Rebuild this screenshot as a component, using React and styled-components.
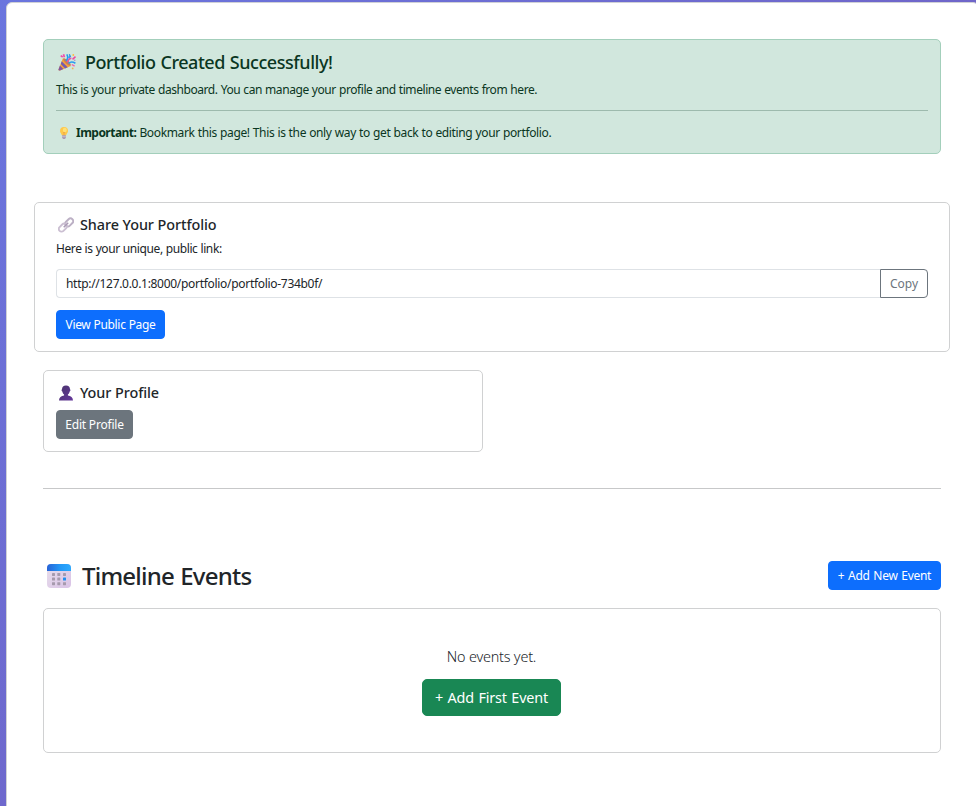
import React from "react";
import styled, { createGlobalStyle } from "styled-components";

const GlobalStyle = createGlobalStyle`
  * { box-sizing: border-box; margin: 0; }
  body {
    margin: 0;
    overflow: hidden;
    font-family: "Noto Sans", "Open Sans", sans-serif;
    font-size: 12px;
    line-height: 19px;
    color: #212529;
  }
`;

const Page = styled.div`
  width: 976px;
  height: 806px;
  overflow: hidden;
  padding: 2px 0 0 6px;
  background: linear-gradient(135deg, #6a75de 0%, #7359b8 100%);
`;

const Panel = styled.main`
  width: 973px;
  height: 840px;
  padding: 36px;
  background: #fff;
  border: 1px solid #d0d1d6;
  border-radius: 6px;
`;

const Label = styled.span`
  letter-spacing: ${(p) => p.$track || 0}px;
  word-spacing: ${(p) => p.$words || 0}px;
  white-space: nowrap;
`;

const Alert = styled.section`
  width: 898px;
  height: 115px;
  padding: 12px;
  color: #0a3622;
  background: #d1e7dd;
  border: 1px solid #a3cfbb;
  border-radius: 5px;
`;

const AlertTitle = styled.h4`
  display: flex;
  align-items: center;
  gap: 9px;
  margin-bottom: 8px;
  padding-left: 2px;
  font-size: 18px;
  font-weight: 500;
  line-height: 20px;
`;

const AlertRule = styled.hr`
  height: 1px;
  margin: 11px 0 12px;
  border: 0;
  background: #9dbaad;
`;

const Tip = styled.p`
  display: flex;
  align-items: center;
  svg { margin: 0 6px 0 2px; }
  strong { margin-right: 3px; }
`;

const Card = styled.section`
  background: #fff;
  border: 1px solid #d0d1d2;
  border-radius: 5px;
`;

const ShareCard = styled(Card)`
  width: 916px;
  height: 150px;
  margin: 48px 0 18px -9px;
  padding: 12px 21px;
`;

const ProfileCard = styled(Card)`
  width: 440px;
  height: 82px;
  padding: 12px;
`;

const CardTitle = styled.h5`
  display: flex;
  align-items: center;
  gap: 6px;
  padding-left: 2px;
  margin-bottom: ${(p) => p.$gap}px;
  font-size: 14.4px;
  font-weight: 500;
  line-height: 19px;
`;

const LinkGroup = styled.div`
  display: flex;
  height: 29px;
  margin: 11px 0 12px;
`;

const LinkField = styled.div`
  flex: 1;
  padding: 4px 9px;
  border: 1px solid #dee2e6;
  border-right: 0;
  border-radius: 4px 0 0 4px;
`;

const Button = styled.button`
  display: block;
  flex: none;
  width: ${(p) => p.$width}px;
  height: 29px;
  padding: 0;
  font: inherit;
  text-align: center;
  color: #fff;
  background: ${(p) => p.$color};
  border: 1px solid ${(p) => p.$color};
  border-radius: 4px;
`;

const CopyButton = styled(Button)`
  color: #6c757d;
  background: #fff;
  border-color: #6c757d;
  border-radius: 0 4px 4px 0;
`;

const LargeButton = styled(Button)`
  height: 37px;
  font-size: 14.4px;
  border-radius: 5px;
`;

const Divider = styled.hr`
  width: 898px;
  height: 1px;
  margin: 36px 0 72px;
  border: 0;
  background: #c7c8c9;
`;

const SectionHeader = styled.header`
  display: flex;
  justify-content: space-between;
  align-items: center;
  width: 898px;
  height: 29px;
  margin-bottom: 18px;
`;

const SectionTitle = styled.h2`
  display: flex;
  align-items: center;
  gap: 11px;
  padding-left: 4px;
  font-size: 24px;
  font-weight: 500;
  line-height: 29px;
`;

const EmptyCard = styled(Card)`
  display: flex;
  flex-direction: column;
  align-items: center;
  gap: 12px;
  width: 898px;
  height: 145px;
  padding: 37px 1px 0 0;
`;

const EmptyText = styled.p`
  font-size: 14.4px;
  font-weight: 300;
  line-height: 21px;
`;

const PartyIcon = () => (
  <svg width="18" height="18" viewBox="0 0 18 18" fill="none">
    <path d="M5 5 13 13 2 17.4Q.2 18 .6 16.3Z" fill="#f5a43c" />
    <path d="M3.7 8.2 9.7 14.3 7 15.4 2.8 11Z" fill="#755bb0" />
    <path d="M1.9 12.5 5.4 16 2 17.4Q.2 18 .6 16.3Z" fill="#8056a2" />
    <ellipse cx="9" cy="9" rx="5" ry="1.6" transform="rotate(45 9 9)" fill="#c87a58" />
    <path d="M8 8Q11 5 8.8 1.4" stroke="#209cf0" strokeWidth="1.6" />
    <path d="M9.3 9.2Q11 5 13.4 5.2" stroke="#eb4fa7" strokeWidth="1.5" />
    <path d="M10.5 10.4Q13.2 7.8 17.4 10.2" stroke="#299df0" strokeWidth="1.6" />
    <path d="m2.7 2.6 2 1.4M5.5 1.3l.9 3" stroke="#ee4daa" strokeWidth="1.7" />
    <path d="m11.3 1.2 1 2.2-1.8 1.2" stroke="#258eea" strokeWidth="1.3" />
    <path d="m14.5 6.3 3-2.6" stroke="#ed46a1" strokeWidth="1.6" />
    <path d="m13.8 11.5 2.8 1.7" stroke="#ef61b0" strokeWidth="1.4" />
    <circle cx="15.3" cy="2" r=".9" fill="#ffb83d" />
    <circle cx="16.8" cy="7.3" r=".7" fill="#a878cb" />
    <circle cx="14.7" cy="15.4" r=".9" fill="#edb454" />
  </svg>
);

const BulbIcon = () => (
  <svg width="12" height="12" viewBox="0 0 12 12">
    <path d="M6 0a4 4 0 0 0-4 4c0 2 1.6 2.8 2 4.6h4C8.4 6.8 10 6 10 4a4 4 0 0 0-4-4Z" fill="#ffc84a" />
    <ellipse cx="6.8" cy="3" rx="2" ry="2.2" fill="#ffe178" />
    <path d="M5 5.2 6 6l1-.8M6 6v2.5" fill="none" stroke="#ed9b48" strokeWidth=".7" />
    <path d="M4.1 8.3h3.8v2.2L7 12H5l-.9-1.5Z" fill="#a99bb3" />
    <path d="M4.1 9.7h3.8" stroke="#d4c9db" strokeWidth=".7" />
  </svg>
);

const ChainIcon = () => (
  <svg width="16" height="16" viewBox="0 0 16 16" fill="none" strokeWidth="1.9">
    <rect x="6.7" y="2.7" width="9" height="5.4" rx="2.7" transform="rotate(-45 11.2 5.4)" stroke="#bcb0c5" />
    <rect x=".3" y="8" width="9" height="5.4" rx="2.7" transform="rotate(-45 4.8 10.7)" stroke="#cbbfd2" />
    <path d="m5.7 10.3 4.5-4.5" stroke="#a99ab4" strokeWidth="1.5" />
  </svg>
);

const PersonIcon = () => (
  <svg width="16" height="16" viewBox="0 0 16 16">
    <defs>
      <linearGradient id="person" x2="1" y2="1">
        <stop stopColor="#49346c" />
        <stop offset="1" stopColor="#65379b" />
      </linearGradient>
    </defs>
    <path d="M8 .6c-2.6 0-4 1.5-4 3.7-.7.4-.5 2 .3 2.2.4 1.5 1 2.5 1.8 3.1v1C3.2 11 1 12.5 1 15.5h14c0-3-2.2-4.5-5.1-4.9v-1c.8-.6 1.4-1.6 1.8-3.1.8-.2 1-1.8.3-2.2C12 2.1 10.6.6 8 .6Z" fill="url(#person)" />
  </svg>
);

const CalendarIcon = () => (
  <svg width="24" height="24" viewBox="0 0 24 24">
    <defs>
      <linearGradient id="sheet" x2="1" y2="1">
        <stop stopColor="#e8dfeb" />
        <stop offset="1" stopColor="#d9c2e6" />
      </linearGradient>
      <linearGradient id="band">
        <stop stopColor="#2863d7" />
        <stop offset=".55" stopColor="#2398f6" />
        <stop offset="1" stopColor="#2daaff" />
      </linearGradient>
    </defs>
    <rect width="24" height="24" rx="4" fill="url(#sheet)" />
    <path d="M0 7V4a4 4 0 0 1 4-4h16a4 4 0 0 1 4 4v3Z" fill="url(#band)" />
    {[9, 13.6, 18.2].map((y) =>
      [5, 10.3, 16].map((x) => (
        <rect key={`${x}-${y}`} x={x} y={y} width="3" height="3" rx=".4" fill={x === 16 && y === 13.6 ? "#248ff0" : "#a69aad"} />
      ))
    )}
  </svg>
);

export default function App() {
  return (
    <Page>
      <GlobalStyle />
      <Panel>
        <Alert>
          <AlertTitle>
            <PartyIcon />
            <Label $track={-0.45} $words={0.6}>Portfolio Created Successfully!</Label>
          </AlertTitle>
          <p>
            <Label $track={-0.43} $words={0.4}>This is your private dashboard. You can manage your profile and timeline events from here.</Label>
          </p>
          <AlertRule />
          <Tip>
            <BulbIcon />
            <Label as="strong" $track={-0.52}>Important:</Label>
            <Label $track={-0.35} $words={0.3}>Bookmark this page! This is the only way to get back to editing your portfolio.</Label>
          </Tip>
        </Alert>

        <ShareCard>
          <CardTitle $gap={5}>
            <ChainIcon />
            <Label $track={-0.07}>Share Your Portfolio</Label>
          </CardTitle>
          <p>
            <Label $track={-0.4} $words={0.3}>Here is your unique, public link:</Label>
          </p>
          <LinkGroup>
            <LinkField>
              <Label $track={-0.3}>http://127.0.0.1:8000/portfolio/portfolio-734b0f/</Label>
            </LinkField>
            <CopyButton $width={48}>Copy</CopyButton>
          </LinkGroup>
          <Button $width={109} $color="#0d6efd">
            <Label $track={-0.33} $words={0.3}>View Public Page</Label>
          </Button>
        </ShareCard>

        <ProfileCard>
          <CardTitle $gap={8}>
            <PersonIcon />
            <Label $track={-0.07}>Your Profile</Label>
          </CardTitle>
          <Button $width={77} $color="#6c757d">
            <Label $track={-0.2}>Edit Profile</Label>
          </Button>
        </ProfileCard>

        <Divider />

        <SectionHeader>
          <SectionTitle>
            <CalendarIcon />
            <Label $track={-0.78} $words={0.8}>Timeline Events</Label>
          </SectionTitle>
          <Button $width={113} $color="#0d6efd">
            <Label $track={-0.27} $words={0.8}>+ Add New Event</Label>
          </Button>
        </SectionHeader>

        <EmptyCard>
          <EmptyText>
            <Label $track={-0.2}>No events yet.</Label>
          </EmptyText>
          <LargeButton $width={139} $color="#198754">
            <Label $track={-0.15} $words={0.9}>+ Add First Event</Label>
          </LargeButton>
        </EmptyCard>
      </Panel>
    </Page>
  );
}
